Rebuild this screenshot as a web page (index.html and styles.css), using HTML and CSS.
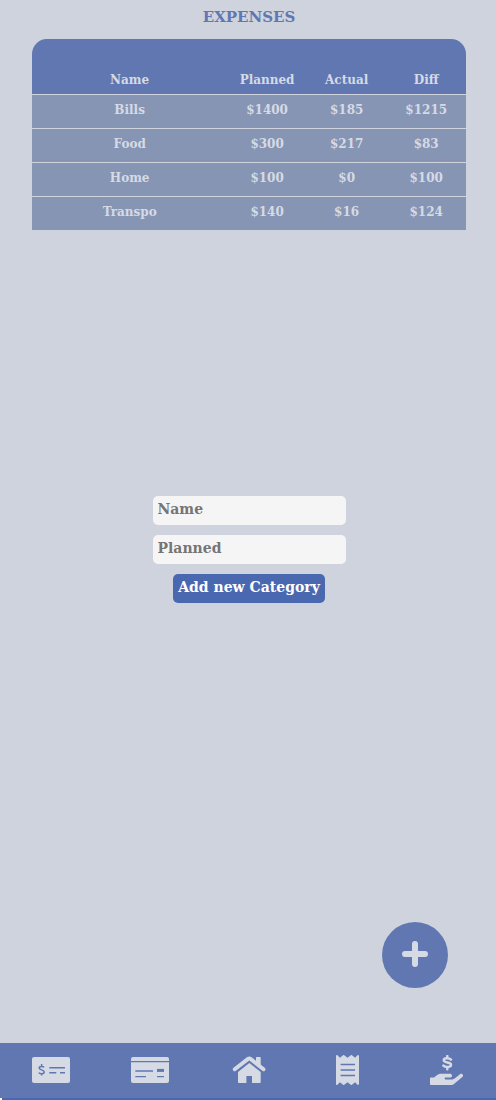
FILE: index.html
```html
<!DOCTYPE html>
<html lang="en">
<head>
<meta charset="utf-8">
<meta name="viewport" content="width=device-width, initial-scale=1">
<title>Expenses</title>
<link rel="stylesheet" href="styles.css">
</head>
<body>
<main class="page">
  <h1 class="title">EXPENSES</h1>
  <table class="budget">
    <thead>
      <tr><th class="col-name" scope="col">Name</th><th scope="col">Planned</th><th scope="col">Actual</th><th scope="col">Diff</th></tr>
    </thead>
    <tbody>
      <tr><td>Bills</td><td>$1400</td><td>$185</td><td>$1215</td></tr>
      <tr><td>Food</td><td>$300</td><td>$217</td><td>$83</td></tr>
      <tr><td>Home</td><td>$100</td><td>$0</td><td>$100</td></tr>
      <tr><td>Transpo</td><td>$140</td><td>$16</td><td>$124</td></tr>
    </tbody>
  </table>
  <form class="category-form">
    <input class="field" type="text" placeholder="Name" aria-label="Name">
    <input class="field" type="text" placeholder="Planned" aria-label="Planned">
    <button class="submit" type="submit">Add new Category</button>
  </form>
</main>
<button class="fab" type="button" aria-label="Add expense">
  <svg width="26" height="26" viewBox="0 0 26 26"><path d="M13 3v20M3 13h20" stroke="currentColor" stroke-width="6" stroke-linecap="round"/></svg>
</button>
<nav class="tabs">
  <a class="tab" href="#income" aria-label="Income">
    <svg width="38" height="26" viewBox="0 0 38 26"><rect width="38" height="26" rx="2" fill="currentColor"/><path class="cut" d="M17.3 10.7H33M17.3 15.7h7M28 15.7h5" stroke-width="1.4"/><path class="cut" d="M12 10.4C11.4 9.2 7.2 8.7 7.2 11c0 2.4 5 1.4 5 4 0 2.3-4.4 2.2-5.4.7M9.6 7v2M9.6 16.5v2" stroke-width="1.5"/></svg>
  </a>
  <a class="tab" href="#budget" aria-label="Budget">
    <svg width="38" height="26" viewBox="0 0 38 26"><rect width="38" height="26" rx="2" fill="currentColor"/><path class="cut" d="M0 4.6h38" stroke-width="1.4"/><path class="cut" d="M4.3 14H22M4.3 19.6H15M26 19.6h7" stroke-width="1.3"/><path class="cut" d="M26 13.4h7" stroke-width="3"/></svg>
  </a>
  <a class="tab" href="#home" aria-label="Home">
    <svg width="34" height="30" viewBox="0 0 34 30"><path d="M24 9V2.6q0-.6.6-.6h3.5q.6 0 .6.6V13zM6 17.1 17.3 8l11.4 9.1V27q0 1-1 1H20v-7h-5.6v7H7q-1 0-1-1z" fill="currentColor"/><path d="m2.7 14.2 13.4-10.3q1.2-.9 2.4 0l13 10.3" fill="none" stroke="currentColor" stroke-width="3.9" stroke-linecap="round"/></svg>
  </a>
  <a class="tab" href="#receipts" aria-label="Receipts">
    <svg width="23" height="30" viewBox="0 0 23 30"><path transform="scale(.0599 .0586)" d="M358.4 3.2L320 48 265.6 3.2a15.9 15.9 0 0 0-19.2 0L192 48 137.6 3.2a15.9 15.9 0 0 0-19.2 0L64 48 25.6 3.2C15-4.7 0 2.8 0 16v480c0 13.2 15 20.7 25.6 12.8L64 464l54.4 44.8a15.9 15.9 0 0 0 19.2 0L192 464l54.4 44.8a15.9 15.9 0 0 0 19.2 0L320 464l38.4 44.8c10.5 7.9 25.6.4 25.6-12.8V16c0-13.2-15.1-20.7-25.6-12.8z" fill="currentColor"/><path class="cut" d="M4.6 9.5H19M4.6 15H19M4.6 20.5H19" stroke-width="1.4"/></svg>
  </a>
  <a class="tab" href="#savings" aria-label="Savings">
    <svg width="33" height="30" viewBox="0 0 33 30"><path transform="scale(.0573 .0586)" d="M565.3 328.1c-11.8-10.7-30.2-10-42.6 0L430.3 402c-11.3 9.1-25.4 14-40 14H272c-8.8 0-16-7.2-16-16s7.2-16 16-16h78.3c15.9 0 30.7-10.9 33.3-26.6 3.3-20-12.1-37.4-31.6-37.4H192c-27 0-53.1 9.3-74.1 26.3L71.4 384H16c-8.8 0-16 7.2-16 16v96c0 8.8 7.2 16 16 16h356.8c14.5 0 28.6-4.9 40-14L564 377c15.2-12.1 16.4-35.3 1.3-48.9z" fill="currentColor"/><path d="M21 4.6C19.5 3 13.8 2.6 13.8 5.3c0 3 7.2 1.4 7.2 4.5 0 2.9-6 2.5-7.6.8M17.3 1v2.3M17.3 12v2.3" fill="none" stroke="currentColor" stroke-width="2.5" stroke-linecap="round"/></svg>
  </a>
</nav>
</body>
</html>
```
FILE: styles.css
```css
* {
  box-sizing: border-box;
}

body {
  margin: 0;
  min-height: 100vh;
  display: flex;
  flex-direction: column;
  background: #ced3de;
  color: #d5dae4;
  font-family: "DejaVu Serif", serif;
  font-weight: bold;
}

.page {
  flex: 1;
  padding: 7px 30px 0 32px;
}

.title {
  margin: 0 0 12px;
  color: #6077b1;
  font-size: 15px;
  line-height: 20px;
  text-align: center;
}

.budget {
  width: 100%;
  table-layout: fixed;
  border-spacing: 0;
  border-radius: 15px 15px 0 0;
  overflow: hidden;
  font-size: 12px;
  line-height: 16px;
  text-align: center;
}

.budget th {
  height: 55px;
  padding: 0 0 6px;
  background: #6077b1;
  vertical-align: bottom;
}

.budget .col-name {
  width: 45%;
}

.budget td {
  height: 34px;
  padding: 0 0 4px;
  border-top: 1px solid #ced3de;
  background: #8795b5;
}

.category-form {
  display: flex;
  flex-direction: column;
  align-items: center;
  gap: 10px;
  margin-top: 266px;
}

.field,
.submit {
  height: 29px;
  padding: 0 5px 4px;
  border: 0;
  border-radius: 5px;
  font: inherit;
  font-size: 14px;
}

.field {
  width: 193px;
  background: #f5f5f5;
  color: #333;
}

.field::placeholder {
  color: #757575;
  opacity: 1;
}

.submit {
  background: #4a68b0;
  color: #fff;
}

.fab {
  position: fixed;
  right: 48px;
  bottom: 112px;
  display: grid;
  place-items: center;
  width: 66px;
  height: 66px;
  padding: 0 0 2px;
  border: 0;
  border-radius: 50%;
  background: #6077b1;
  color: #d5dae4;
}

.tabs {
  display: flex;
  padding-left: 2px;
  background: #6077b1;
}

.tab {
  flex: 1;
  display: flex;
  align-items: center;
  justify-content: center;
  height: 55px;
  padding-bottom: 2px;
  color: #d5dae4;
}

.cut {
  fill: none;
  stroke: #6077b1;
}

body::after {
  content: "";
  height: 2px;
  border-left: 2px solid #fff;
  background: #4968b3;
}
```
